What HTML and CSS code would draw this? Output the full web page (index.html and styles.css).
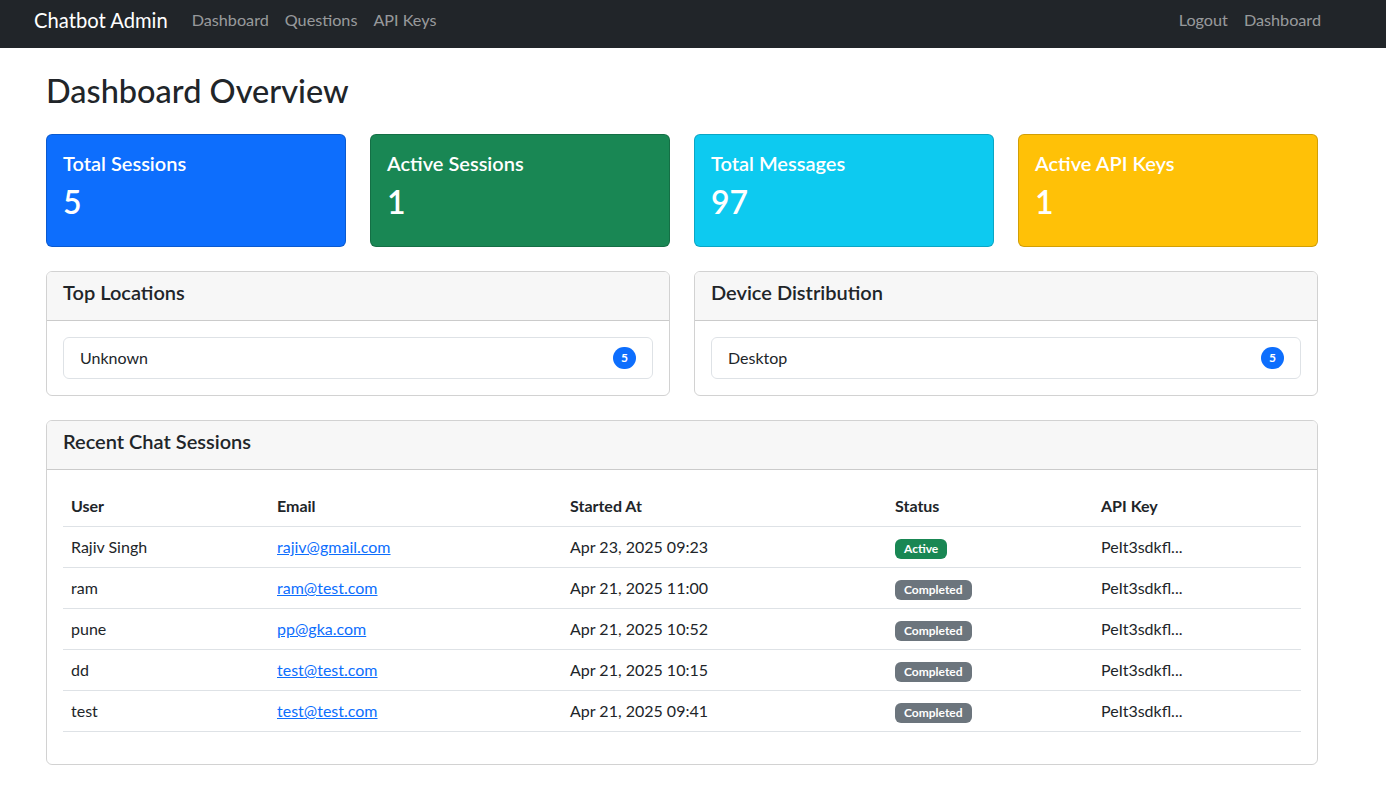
FILE: index.html
```html
<!DOCTYPE html>
<html lang="en">
<head>
<meta charset="utf-8">
<title>Chatbot Admin</title>
<link rel="stylesheet" href="styles.css">
</head>
<body>
<nav class="navbar">
  <div class="nav-left">
    <a class="brand" href="#">Chatbot Admin</a>
    <a class="nav-link" href="#">Dashboard</a>
    <a class="nav-link" href="#">Questions</a>
    <a class="nav-link" href="#">API Keys</a>
  </div>
  <div class="nav-right">
    <a class="nav-link" href="#">Logout</a>
    <a class="nav-link" href="#">Dashboard</a>
  </div>
</nav>
<main class="container">
  <h2 class="page-title">Dashboard Overview</h2>
  <div class="stats">
    <div class="stat bg-blue"><h5 class="stat-title">Total Sessions</h5><h2 class="stat-value">5</h2></div>
    <div class="stat bg-green"><h5 class="stat-title">Active Sessions</h5><h2 class="stat-value">1</h2></div>
    <div class="stat bg-cyan"><h5 class="stat-title">Total Messages</h5><h2 class="stat-value">97</h2></div>
    <div class="stat bg-yellow"><h5 class="stat-title">Active API Keys</h5><h2 class="stat-value">1</h2></div>
  </div>
  <div class="two-col">
    <div class="card">
      <div class="card-header"><h5 class="card-title">Top Locations</h5></div>
      <div class="card-body">
        <ul class="list-group"><li class="list-item"><span>Unknown</span><span class="pill">5</span></li></ul>
      </div>
    </div>
    <div class="card">
      <div class="card-header"><h5 class="card-title">Device Distribution</h5></div>
      <div class="card-body">
        <ul class="list-group"><li class="list-item"><span>Desktop</span><span class="pill">5</span></li></ul>
      </div>
    </div>
  </div>
  <div class="card">
    <div class="card-header"><h5 class="card-title">Recent Chat Sessions</h5></div>
    <div class="card-body">
      <table class="table">
        <colgroup><col class="c-user"><col class="c-email"><col class="c-start"><col class="c-status"><col class="c-key"></colgroup>
        <thead><tr><th>User</th><th>Email</th><th>Started At</th><th>Status</th><th>API Key</th></tr></thead>
        <tbody>
          <tr><td>Rajiv Singh</td><td><a href="#">rajiv@gmail.com</a></td><td>Apr 23, 2025 09:23</td><td><span class="badge b-green">Active</span></td><td>PeIt3sdkfl...</td></tr>
          <tr><td>ram</td><td><a href="#">ram@test.com</a></td><td>Apr 21, 2025 11:00</td><td><span class="badge b-gray">Completed</span></td><td>PeIt3sdkfl...</td></tr>
          <tr><td>pune</td><td><a href="#">pp@gka.com</a></td><td>Apr 21, 2025 10:52</td><td><span class="badge b-gray">Completed</span></td><td>PeIt3sdkfl...</td></tr>
          <tr><td>dd</td><td><a href="#">test@test.com</a></td><td>Apr 21, 2025 10:15</td><td><span class="badge b-gray">Completed</span></td><td>PeIt3sdkfl...</td></tr>
          <tr><td>test</td><td><a href="#">test@test.com</a></td><td>Apr 21, 2025 09:41</td><td><span class="badge b-gray">Completed</span></td><td>PeIt3sdkfl...</td></tr>
        </tbody>
      </table>
    </div>
  </div>
</main>
</body>
</html>
```
FILE: styles.css
```css
* { box-sizing: border-box; }
body {
  margin: 0;
  font-family: Lato, "Noto Sans", sans-serif;
  font-size: 16px;
  line-height: 1.5;
  color: #212529;
  background: #fff;
}
h2, h5 { margin: 0 0 8px; font-weight: 600; line-height: 1.2; }
h2 { font-size: 32px; }
h5 { font-size: 20px; }
.page-title { font-weight: 500; font-size: 32.5px; line-height: 38.4px; }

.navbar {
  height: 48px;
  background: #212529;
  display: flex;
  justify-content: space-between;
  align-items: center;
  padding: 0 57px 8px 34px;
}
.nav-left, .nav-right { display: flex; align-items: center; }
.brand {
  color: #fff;
  text-decoration: none;
  font-size: 20.2px;
  line-height: 30px;
  margin-right: 16px;
}
.nav-link {
  color: rgba(255,255,255,.55);
  text-decoration: none;
  padding: 0 8px;
  line-height: 24px;
  font-size: 16.2px;
}

.container {
  width: 1272px;
  margin: 0 46px;
  padding-top: 24px;
}
.page-title { margin-bottom: 24px; }

.stats {
  display: grid;
  grid-template-columns: repeat(4, 1fr);
  gap: 24px;
  margin-bottom: 24px;
}
.stat {
  border-radius: 6px;
  padding: 16px;
  color: #fff;
  border: 1px solid rgba(0,0,0,.175);
}
.stat-title { margin-bottom: 8px; }
.stat-value { margin-bottom: 8px; }
.bg-blue { background: #0d6efd; }
.bg-green { background: #198754; }
.bg-cyan { background: #0dcaf0; }
.bg-yellow { background: #ffc107; }

.two-col {
  display: grid;
  grid-template-columns: 1fr 1fr;
  gap: 24px;
  margin-bottom: 24px;
}
.card {
  border: 1px solid rgba(0,0,0,.175);
  border-radius: 6px;
  overflow: hidden;
}
.card-header {
  background: #f7f7f7;
  border-bottom: 1px solid rgba(0,0,0,.175);
  padding: 8px 16px;
}
.card-title { margin-bottom: 8px; }
.card-body { padding: 16px; }

.list-group { list-style: none; margin: 0; padding: 0; }
.list-item {
  display: flex;
  justify-content: space-between;
  align-items: center;
  border: 1px solid #dee2e6;
  border-radius: 6px;
  padding: 8px 16px;
}
.pill {
  background: #0d6efd;
  color: #fff;
  font-size: 12px;
  font-weight: 700;
  line-height: 1;
  padding: 5px 8px;
  border-radius: 50rem;
}

.table {
  width: 100%;
  border-collapse: collapse;
  table-layout: fixed;
  margin-bottom: 16px;
}
.c-user { width: 206px; }
.c-email { width: 293px; }
.c-start { width: 325px; }
.c-status { width: 206px; }
.c-key { width: 208px; }
.table th, .table td {
  text-align: left;
  padding: 8px;
  border-bottom: 1px solid #dee2e6;
  vertical-align: middle;
}
.table th { font-weight: 700; }
.table a { color: #0d6efd; text-decoration: underline; }
.badge {
  display: inline-block;
  color: #fff;
  font-size: 12px;
  font-weight: 700;
  line-height: 1;
  padding: 4px 9px;
  border-radius: 6px;
}
.b-green { background: #198754; }
.b-gray { background: #6c757d; }
```
